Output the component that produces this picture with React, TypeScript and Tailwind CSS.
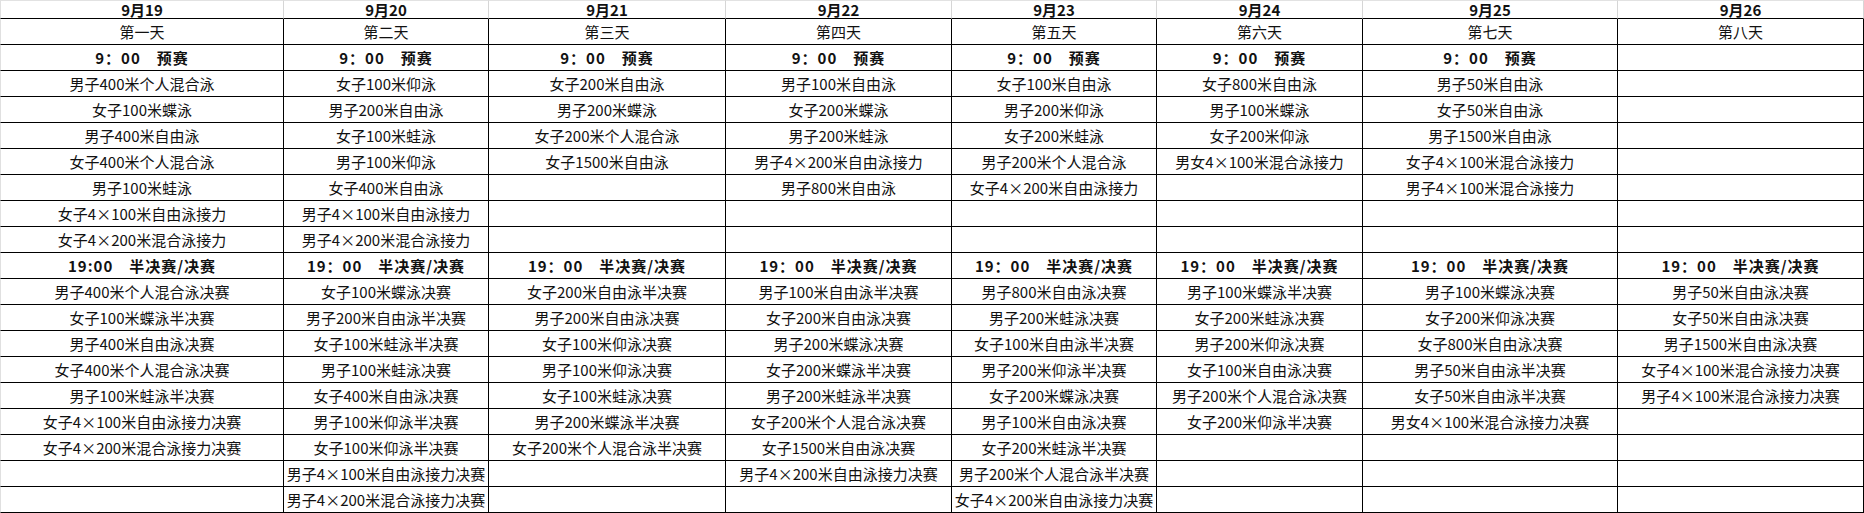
import React from "react";

const H9 = "9：00　预赛";
const H19 = "19：00　半决赛/决赛";

type Col = { date: string; day: string; rows: string[] };

const cols: Col[] = [
  {
    date: "9月19",
    day: "第一天",
    rows: [
      H9,
      "男子400米个人混合泳",
      "女子100米蝶泳",
      "男子400米自由泳",
      "女子400米个人混合泳",
      "男子100米蛙泳",
      "女子4×100米自由泳接力",
      "女子4×200米混合泳接力",
      "19:00　半决赛/决赛",
      "男子400米个人混合泳决赛",
      "女子100米蝶泳半决赛",
      "男子400米自由泳决赛",
      "女子400米个人混合泳决赛",
      "男子100米蛙泳半决赛",
      "女子4×100米自由泳接力决赛",
      "女子4×200米混合泳接力决赛",
      "",
      "",
    ],
  },
  {
    date: "9月20",
    day: "第二天",
    rows: [
      H9,
      "女子100米仰泳",
      "男子200米自由泳",
      "女子100米蛙泳",
      "男子100米仰泳",
      "女子400米自由泳",
      "男子4×100米自由泳接力",
      "男子4×200米混合泳接力",
      H19,
      "女子100米蝶泳决赛",
      "男子200米自由泳半决赛",
      "女子100米蛙泳半决赛",
      "男子100米蛙泳决赛",
      "女子400米自由泳决赛",
      "男子100米仰泳半决赛",
      "女子100米仰泳半决赛",
      "男子4×100米自由泳接力决赛",
      "男子4×200米混合泳接力决赛",
    ],
  },
  {
    date: "9月21",
    day: "第三天",
    rows: [
      H9,
      "女子200米自由泳",
      "男子200米蝶泳",
      "女子200米个人混合泳",
      "女子1500米自由泳",
      "",
      "",
      "",
      H19,
      "女子200米自由泳半决赛",
      "男子200米自由泳决赛",
      "女子100米仰泳决赛",
      "男子100米仰泳决赛",
      "女子100米蛙泳决赛",
      "男子200米蝶泳半决赛",
      "女子200米个人混合泳半决赛",
      "",
      "",
    ],
  },
  {
    date: "9月22",
    day: "第四天",
    rows: [
      H9,
      "男子100米自由泳",
      "女子200米蝶泳",
      "男子200米蛙泳",
      "男子4×200米自由泳接力",
      "男子800米自由泳",
      "",
      "",
      H19,
      "男子100米自由泳半决赛",
      "女子200米自由泳决赛",
      "男子200米蝶泳决赛",
      "女子200米蝶泳半决赛",
      "男子200米蛙泳半决赛",
      "女子200米个人混合泳决赛",
      "女子1500米自由泳决赛",
      "男子4×200米自由泳接力决赛",
      "",
    ],
  },
  {
    date: "9月23",
    day: "第五天",
    rows: [
      H9,
      "女子100米自由泳",
      "男子200米仰泳",
      "女子200米蛙泳",
      "男子200米个人混合泳",
      "女子4×200米自由泳接力",
      "",
      "",
      H19,
      "男子800米自由泳决赛",
      "男子200米蛙泳决赛",
      "女子100米自由泳半决赛",
      "男子200米仰泳半决赛",
      "女子200米蝶泳决赛",
      "男子100米自由泳决赛",
      "女子200米蛙泳半决赛",
      "男子200米个人混合泳半决赛",
      "女子4×200米自由泳接力决赛",
    ],
  },
  {
    date: "9月24",
    day: "第六天",
    rows: [
      H9,
      "女子800米自由泳",
      "男子100米蝶泳",
      "女子200米仰泳",
      "男女4×100米混合泳接力",
      "",
      "",
      "",
      H19,
      "男子100米蝶泳半决赛",
      "女子200米蛙泳决赛",
      "男子200米仰泳决赛",
      "女子100米自由泳决赛",
      "男子200米个人混合泳决赛",
      "女子200米仰泳半决赛",
      "",
      "",
      "",
    ],
  },
  {
    date: "9月25",
    day: "第七天",
    rows: [
      H9,
      "男子50米自由泳",
      "女子50米自由泳",
      "男子1500米自由泳",
      "女子4×100米混合泳接力",
      "男子4×100米混合泳接力",
      "",
      "",
      H19,
      "男子100米蝶泳决赛",
      "女子200米仰泳决赛",
      "女子800米自由泳决赛",
      "男子50米自由泳半决赛",
      "女子50米自由泳半决赛",
      "男女4×100米混合泳接力决赛",
      "",
      "",
      "",
    ],
  },
  {
    date: "9月26",
    day: "第八天",
    rows: [
      "",
      "",
      "",
      "",
      "",
      "",
      "",
      "",
      H19,
      "男子50米自由泳决赛",
      "女子50米自由泳决赛",
      "男子1500米自由泳决赛",
      "女子4×100米混合泳接力决赛",
      "男子4×100米混合泳接力决赛",
      "",
      "",
      "",
      "",
    ],
  },
];

const boldRows = new Set([0, 8]);

export default function App() {
  const font = {
    fontFamily: '"Noto Sans CJK SC", "Liberation Sans", sans-serif',
  };
  return (
    <div
      className="w-[1864px] h-[513px] bg-white text-[#111] overflow-hidden"
      style={font}
    >
      <div className="grid grid-cols-[284px_205px_237px_226px_205px_206px_255px_246px]">
        {cols.map((c, i) => (
          <div
            key={"d" + i}
            className={
              "h-[19px] flex items-center justify-center border-t border-t-[#e2e2e2] border-r border-r-[#d6d6d6] border-b border-b-black text-[15px] leading-none font-bold " +
              (i === 0 ? "border-l border-l-[#e0e0e0]" : "")
            }
          >
            {c.date}
          </div>
        ))}
        {cols.map((c, i) => (
          <div
            key={"w" + i}
            className={
              "h-[26px] flex items-center justify-center border-r border-b border-black text-[15px] leading-none " +
              (i === 0 ? "border-l border-l-[#e0e0e0]" : "")
            }
          >
            {c.day}
          </div>
        ))}
        {Array.from({ length: 18 }).map((_, r) =>
          cols.map((c, i) => (
            <div
              key={r + "-" + i}
              className={
                "h-[26px] flex items-center justify-center border-r border-b border-black text-[15px] leading-none whitespace-nowrap " +
                (boldRows.has(r) ? "font-bold tracking-[1px] " : "") +
                (i === 0 ? "border-l border-l-[#e0e0e0]" : "")
              }
            >
              {c.rows[r]}
            </div>
          ))
        )}
      </div>
    </div>
  );
}
